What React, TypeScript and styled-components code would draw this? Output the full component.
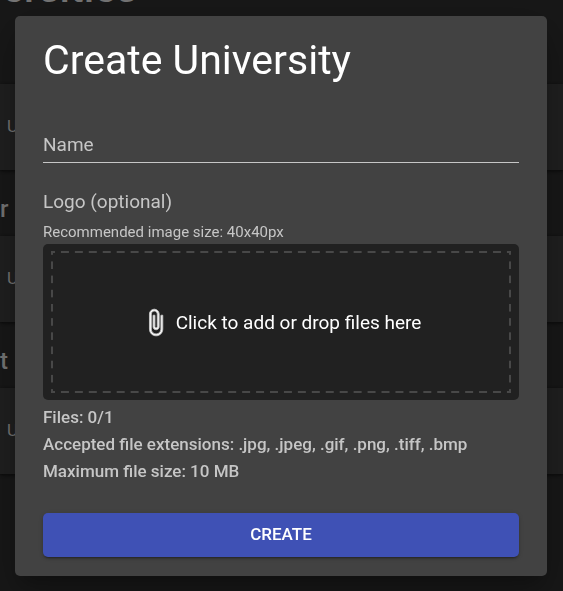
import React from "react";
import styled, { createGlobalStyle } from "styled-components";

const GlobalStyle = createGlobalStyle`
  *, *::before, *::after { box-sizing: border-box; }
  html { background: #181818; }
  body {
    margin: 0;
    font-family: Roboto, "Liberation Sans", sans-serif;
    color: #fff;
    overflow: hidden;
  }
`;

const Page = styled.main`
  min-height: 100vh;
  background: #181818;
  color: #767676;
`;

const PageTitle = styled.h1`
  height: 120px;
  margin: -36px 0 0;
  padding-left: 2px;
  font-size: 41px;
  font-weight: 500;
  line-height: 48px;
`;

const Heading = styled.h2`
  margin: 0;
  height: 66px;
  font-size: 24px;
  font-weight: 500;
  line-height: 78px;
`;

const Card = styled.section`
  height: 86px;
  padding-left: 7px;
  background: #202020;
  box-shadow: 0 1px 3px #0a0a0a;
  font-size: 17px;
  line-height: 84px;
`;

const Backdrop = styled.div`
  position: fixed;
  inset: 0;
  display: flex;
  align-items: flex-start;
  padding: 16px 16px 0 15px;
`;

const Dialog = styled.form`
  display: flex;
  flex-direction: column;
  flex: 1;
  padding: 16px 28px 19px;
  border-radius: 5px;
  background: #424242;
  box-shadow: 0 11px 15px -7px rgba(0, 0, 0, 0.2), 0 24px 38px 3px rgba(0, 0, 0, 0.14),
    0 9px 46px 8px rgba(0, 0, 0, 0.12);
`;

const Title = styled.h2`
  margin: 0 0 40px;
  font-size: 41px;
  font-weight: 400;
  line-height: 56px;
`;

const NameInput = styled.input`
  width: 100%;
  height: 35px;
  padding: 0 0 2px;
  border: 0;
  border-bottom: 1px solid #c6c6c6;
  border-radius: 0;
  outline: 0;
  background: transparent;
  color: #fff;
  font: inherit;
  font-size: 19px;
  &::placeholder { color: #c6c6c6; opacity: 1; }
`;

const LogoLabel = styled.label`
  margin-top: 24px;
  color: #c6c6c6;
  font-size: 19px;
  line-height: 30px;
`;

const Hint = styled.p`
  margin: 3px 0 0;
  color: #c6c6c6;
  font-size: 15px;
  line-height: 24px;
`;

const DropZone = styled.button`
  height: 156px;
  padding: 7px 8px;
  border: 0;
  border-radius: 5px;
  background: #212121;
  color: #fff;
  font: inherit;
  font-size: 19px;
`;

const dashes = (direction: string) =>
  `linear-gradient(${direction}, #484848 27%, transparent 27% 73%, #484848 73%)`;

const DropArea = styled.span`
  display: flex;
  align-items: center;
  justify-content: center;
  height: 100%;
  background:
    ${dashes("to right")} left top / 14px 2px round no-repeat,
    ${dashes("to right")} left bottom / 14px 2px round no-repeat,
    ${dashes("to bottom")} left top / 2px 14px no-repeat round,
    ${dashes("to bottom")} right top / 2px 14px no-repeat round;
`;

const ClipIcon = styled.svg`
  width: 29px;
  height: 29px;
  margin-right: 6px;
  fill: #fff;
  stroke: #c4c4c4;
  stroke-width: 0.8px;
`;

const Facts = styled.ul`
  margin: 4px 0 28px;
  padding: 0;
  list-style: none;
  color: #c6c6c6;
  font-size: 17px;
  font-weight: 500;
  line-height: 27px;
`;

const Submit = styled.button`
  height: 44px;
  padding: 0 0 2px;
  border: 0;
  border-radius: 5px;
  background: #3f51b5;
  box-shadow: 0 3px 1px -2px rgba(0, 0, 0, 0.2), 0 2px 2px rgba(0, 0, 0, 0.14),
    0 1px 5px rgba(0, 0, 0, 0.12);
  color: #fff;
  font: inherit;
  font-size: 17px;
  font-weight: 500;
  text-transform: uppercase;
`;

const facts = [
  "Files: 0/1",
  "Accepted file extensions: .jpg, .jpeg, .gif, .png, .tiff, .bmp",
  "Maximum file size: 10 MB",
];

export default function App() {
  return (
    <>
      <GlobalStyle />
      <Page aria-hidden="true">
        <PageTitle>ersities</PageTitle>
        <Card>U</Card>
        <Heading>r</Heading>
        <Card>U</Card>
        <Heading>t</Heading>
        <Card>U</Card>
      </Page>
      <Backdrop>
        <Dialog role="dialog" aria-labelledby="dialog-title" onSubmit={(e) => e.preventDefault()}>
          <Title id="dialog-title">Create University</Title>
          <NameInput aria-label="Name" placeholder="Name" />
          <LogoLabel htmlFor="logo">Logo (optional)</LogoLabel>
          <Hint>Recommended image size: 40x40px</Hint>
          <DropZone id="logo" type="button">
            <DropArea>
              <ClipIcon viewBox="0 0 24 24" aria-hidden="true">
                <path d="M16.5 6v11.5c0 2.21-1.79 4-4 4s-4-1.79-4-4V5c0-1.38 1.12-2.5 2.5-2.5s2.5 1.12 2.5 2.5v10.5c0 .55-.45 1-1 1s-1-.45-1-1V6H10v9.5c0 1.38 1.12 2.5 2.5 2.5s2.5-1.12 2.5-2.5V5c0-2.21-1.79-4-4-4S7 2.79 7 5v12.5c0 3.04 2.46 5.5 5.5 5.5s5.5-2.46 5.5-5.5V6h-1.5z" />
              </ClipIcon>
              Click to add or drop files here
            </DropArea>
          </DropZone>
          <Facts>
            {facts.map((fact) => (
              <li key={fact}>{fact}</li>
            ))}
          </Facts>
          <Submit type="submit">Create</Submit>
        </Dialog>
      </Backdrop>
    </>
  );
}
